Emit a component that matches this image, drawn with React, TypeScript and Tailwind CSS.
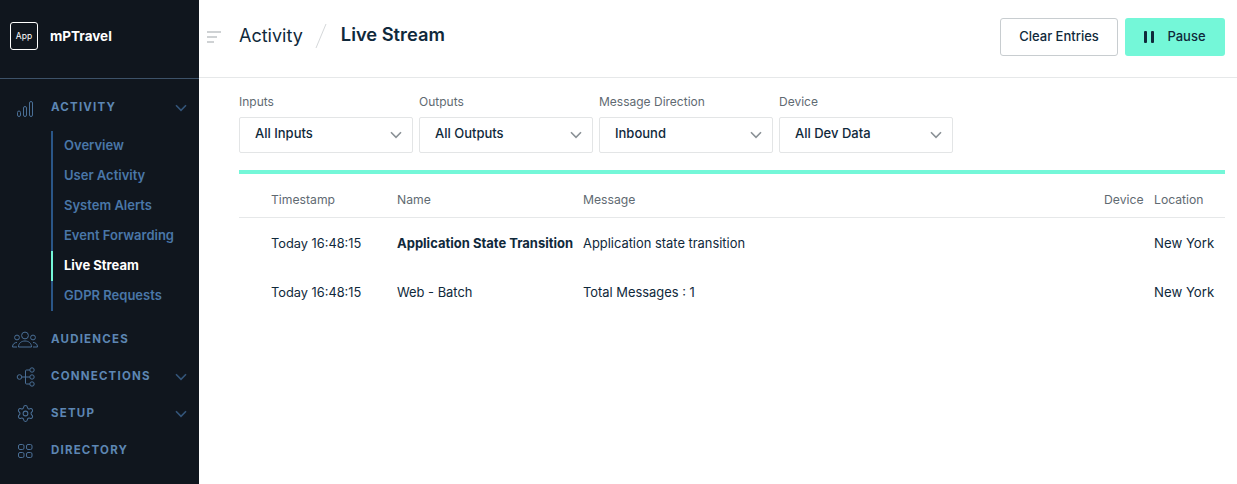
import React from "react";
import { Settings } from "lucide-react";

const Chevron = ({ className }: { className: string }) => (
  <svg viewBox="0 0 12 8" className={className} fill="none" stroke="currentColor" strokeWidth="1.6">
    <path d="M1 1.2 6 6.4 11 1.2" />
  </svg>
);

const iconClass = "w-[28px] h-[24px] text-[#4a6f96]";

const BarsIcon = () => (
  <svg viewBox="0 0 28 24" className={iconClass} fill="none" stroke="currentColor" strokeWidth="1">
    <rect x="6.500" y="15" width="3" height="5.500" rx="1.500" />
    <rect x="12.500" y="10.500" width="3" height="10" rx="1.500" />
    <rect x="18.500" y="5.500" width="3" height="15" rx="1.500" />
  </svg>
);
const PeopleIcon = () => (
  <svg viewBox="0 0 28 24" className={iconClass} fill="none" stroke="currentColor" strokeWidth="1">
    <circle cx="14" cy="7.500" r="3.400" />
    <circle cx="6" cy="9.500" r="2.400" />
    <circle cx="22" cy="9.500" r="2.400" />
    <path d="M7.500 19c0-4 3-6 6.500-6s6.500 2 6.500 6z" />
    <path d="M6 19H1.500c0-3 2-4.500 4.500-4.500M22 19h4.500c0-3-2-4.500-4.500-4.500" />
  </svg>
);
const TreeIcon = () => (
  <svg viewBox="0 0 28 24" className={iconClass} fill="none" stroke="currentColor" strokeWidth="1">
    <circle cx="8.500" cy="12" r="2.300" />
    <circle cx="21" cy="5" r="2.200" />
    <circle cx="21" cy="12" r="2.200" />
    <circle cx="21" cy="19" r="2.200" />
    <path d="M10.800 12h8M14.500 12V6c0-.7.400-1 1-1h3.300M14.500 12v6c0 .7.400 1 1 1h3.300" />
  </svg>
);
const GridIcon = () => (
  <svg viewBox="0 0 28 24" className={iconClass} fill="none" stroke="currentColor" strokeWidth="1">
    <rect x="7.500" y="5.500" width="5.500" height="5" rx="1.500" />
    <rect x="15.500" y="5.500" width="5.500" height="5" rx="1.500" />
    <rect x="7.500" y="13.500" width="5.500" height="5" rx="1.500" />
    <rect x="15.500" y="13.500" width="5.500" height="5" rx="1.500" />
  </svg>
);
const GearIcon = () => <Settings size={19} strokeWidth={1.3} className="text-[#4a6f96]" />;

const NavHead = ({ icon, label, chevron }: { icon: React.ReactNode; label: string; chevron?: boolean }) => (
  <div className="flex items-center h-[37px] pl-[11px] pr-[12px]">
    <div className="w-[28px] flex justify-center">{icon}</div>
    <span className="ml-[12px] text-[11.500px] font-bold tracking-[1.200px] text-[#5d86b3]">{label}</span>
    {chevron && <Chevron className="ml-auto w-[12px] h-[8px] text-[#34557a]" />}
  </div>
);

const subItems = ["Overview", "User Activity", "System Alerts", "Event Forwarding", "Live Stream", "GDPR Requests"];

const Filter = ({ label, value }: { label: string; value: string }) => (
  <div className="w-[174px]">
    <div className="h-[17px] text-[12px] leading-[17px] text-[#5f6a72]">{label}</div>
    <div className="mt-[7px] h-[36px] flex items-center pl-[15px] pr-[10px] border border-[#e3e5e6] rounded-[2px] bg-white">
      <span className="text-[13px] font-medium text-[#10293b] -translate-y-[1px]">{value}</span>
      <Chevron className="ml-auto w-[12px] h-[8px] text-[#8a9196]" />
    </div>
  </div>
);

const gridCols = "grid grid-cols-[32px_126px_186px_521px_50px_1fr]";

export default function App() {
  return (
    <div className="flex h-[484px] w-[1237px] overflow-hidden bg-white font-['Inter','Liberation_Sans',sans-serif] text-[#10293b]">
      <aside className="w-[199px] shrink-0 bg-[#10161e]">
        <div className="h-[79px] border-b border-[#3d5269] flex items-center pl-[10px] pb-[6px]">
          <div className="w-[28px] h-[28px] border border-white rounded-[3px] flex items-center justify-center text-[8.500px] text-white">App</div>
          <span className="ml-[12px] text-[13.500px] font-bold text-white">mPTravel</span>
        </div>
        <div className="pt-[10px]">
          <NavHead icon={<BarsIcon />} label="ACTIVITY" chevron />
          <div className="ml-[51px] mt-[5px] w-[148px] border-l-2 border-[#2a5688]">
            {subItems.map((s) => (
              <div
                key={s}
                className={
                  s === "Live Stream"
                    ? "-ml-[2px] h-[30px] pl-[11px] flex items-center text-[13px] font-bold text-white border-l-2 border-[#74f7d8]"
                    : "h-[30px] pl-[11px] flex items-center text-[13px] font-semibold text-[#4a77a8]"
                }
              >
                {s}
              </div>
            ))}
          </div>
          <div className="mt-[10px]">
            <NavHead icon={<PeopleIcon />} label="AUDIENCES" />
            <NavHead icon={<TreeIcon />} label="CONNECTIONS" chevron />
            <NavHead icon={<GearIcon />} label="SETUP" chevron />
            <NavHead icon={<GridIcon />} label="DIRECTORY" />
          </div>
        </div>
      </aside>
      <main className="flex-1 min-w-0">
        <header className="h-[78px] border-b border-[#e6e8e9] flex items-center pl-[8px] pr-[12px] pb-[3px]">
          <svg viewBox="0 0 14 12" className="w-[14px] h-[12px] text-[#cfd2d4]" fill="currentColor">
            <rect x="0" y="0" width="14" height="2" />
            <rect x="0" y="5" width="10" height="2" />
            <rect x="0" y="10" width="7" height="2" />
          </svg>
          <span className="ml-[18px] text-[18px] text-[#10293b] -translate-y-[2px]">Activity</span>
          <svg viewBox="0 0 12 26" className="ml-[12px] w-[12px] h-[26px] text-[#d5d8da] -translate-y-[1px]" fill="none" stroke="currentColor">
            <path d="M11 1 1 25" />
          </svg>
          <span className="ml-[14px] text-[18.300px] font-semibold text-[#10293b] -translate-y-[2px]">Live Stream</span>
          <button className="ml-auto w-[118px] h-[38px] border border-[#c8cdd0] rounded-[3px] text-[13px] font-medium text-[#10293b] bg-white">Clear Entries</button>
          <button className="ml-[7px] w-[100px] h-[38px] rounded-[3px] bg-[#74f7d8] text-[13px] font-medium text-[#10293b] flex items-center justify-center">
            <span className="flex gap-[4px] mr-[13px]">
              <span className="w-[3px] h-[12px] rounded-[1px] bg-[#10293b]" />
              <span className="w-[3px] h-[12px] rounded-[1px] bg-[#10293b]" />
            </span>
            Pause
          </button>
        </header>
        <div className="px-[40px] pr-[12px] pt-[15px]">
          <div className="flex gap-[6px]">
            <Filter label="Inputs" value="All Inputs" />
            <Filter label="Outputs" value="All Outputs" />
            <Filter label="Message Direction" value="Inbound" />
            <Filter label="Device" value="All Dev Data" />
          </div>
          <div className="mt-[17px] h-[4px] bg-[#74f7d8]" />
          <div className={`${gridCols} h-[44px] items-center border-b border-[#e6e8e9] text-[12.200px] text-[#5f6a72] pt-[10px]`}>
            <span />
            <span>Timestamp</span>
            <span>Name</span>
            <span>Message</span>
            <span>Device</span>
            <span>Location</span>
          </div>
          <div className={`${gridCols} h-[51px] items-center text-[12.900px] text-[#10293b]`}>
            <span />
            <span className="text-[12.800px]">Today 16:48:15</span>
            <span className="text-[13px] font-bold whitespace-nowrap">Application State Transition</span>
            <span>Application state transition</span>
            <span />
            <span className="text-[13.200px]">New York</span>
          </div>
          <div className={`${gridCols} h-[48px] items-center text-[12.900px] text-[#10293b]`}>
            <span />
            <span className="text-[12.800px]">Today 16:48:15</span>
            <span>Web - Batch</span>
            <span>Total Messages : 1</span>
            <span />
            <span className="text-[13.200px]">New York</span>
          </div>
        </div>
      </main>
    </div>
  );
}
